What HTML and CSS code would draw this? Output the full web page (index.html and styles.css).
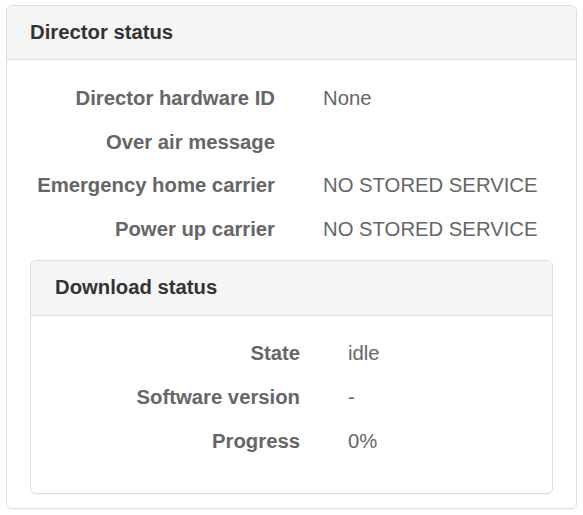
FILE: index.html
```html
<!DOCTYPE html>
<html>
<head>
<meta charset="utf-8">
<link rel="stylesheet" href="styles.css">
</head>
<body>
<div class="panel outer">
  <div class="panel-heading">Director status</div>
  <div class="panel-body outer-body">
    <dl class="kv">
      <dt>Director hardware ID</dt><dd>None</dd>
      <dt>Over air message</dt><dd></dd>
      <dt>Emergency home carrier</dt><dd>NO STORED SERVICE</dd>
      <dt>Power up carrier</dt><dd>NO STORED SERVICE</dd>
    </dl>
    <div class="panel inner">
      <div class="panel-heading">Download status</div>
      <div class="panel-body inner-body">
        <dl class="kv">
          <dt>State</dt><dd>idle</dd>
          <dt>Software version</dt><dd>-</dd>
          <dt>Progress</dt><dd>0%</dd>
        </dl>
      </div>
    </div>
  </div>
</div>
</body>
</html>
```

FILE: styles.css
```css
html, body {
  margin: 0;
  padding: 0;
  background: #fff;
}
body {
  font-family: "Liberation Sans", Arial, sans-serif;
  font-size: 20.3px;
  line-height: 28.6px;
  color: #333;
  padding: 5px 6px;
}
.panel {
  border: 1px solid #dedede;
  border-radius: 6px;
  background: #fff;
  box-shadow: 0 1px 1px rgba(0,0,0,0.04);
}
.panel-heading {
  background: #f5f5f5;
  border-bottom: 1px solid #dedede;
  border-radius: 5px 5px 0 0;
  padding: 0 23px;
  height: 53px;
  line-height: 52px;
  font-weight: bold;
  color: #333;
}
.inner .panel-heading {
  height: 54px;
  line-height: 52px;
  padding: 0 24px;
}
.outer-body {
  padding: 24px 23px 14px;
}
.inner-body {
  padding: 23px 24px 38px;
}
.kv {
  display: grid;
  grid-template-columns: 245px 1fr;
  column-gap: 48px;
  row-gap: 15px;
  margin: 0;
}
.outer-body > .kv {
  margin-bottom: 17px;
}
.kv dt {
  text-align: right;
  font-weight: bold;
  color: #666;
  min-height: 28.6px;
}
.kv dd {
  margin: 0;
  color: #666;
  min-height: 28.6px;
}
```
